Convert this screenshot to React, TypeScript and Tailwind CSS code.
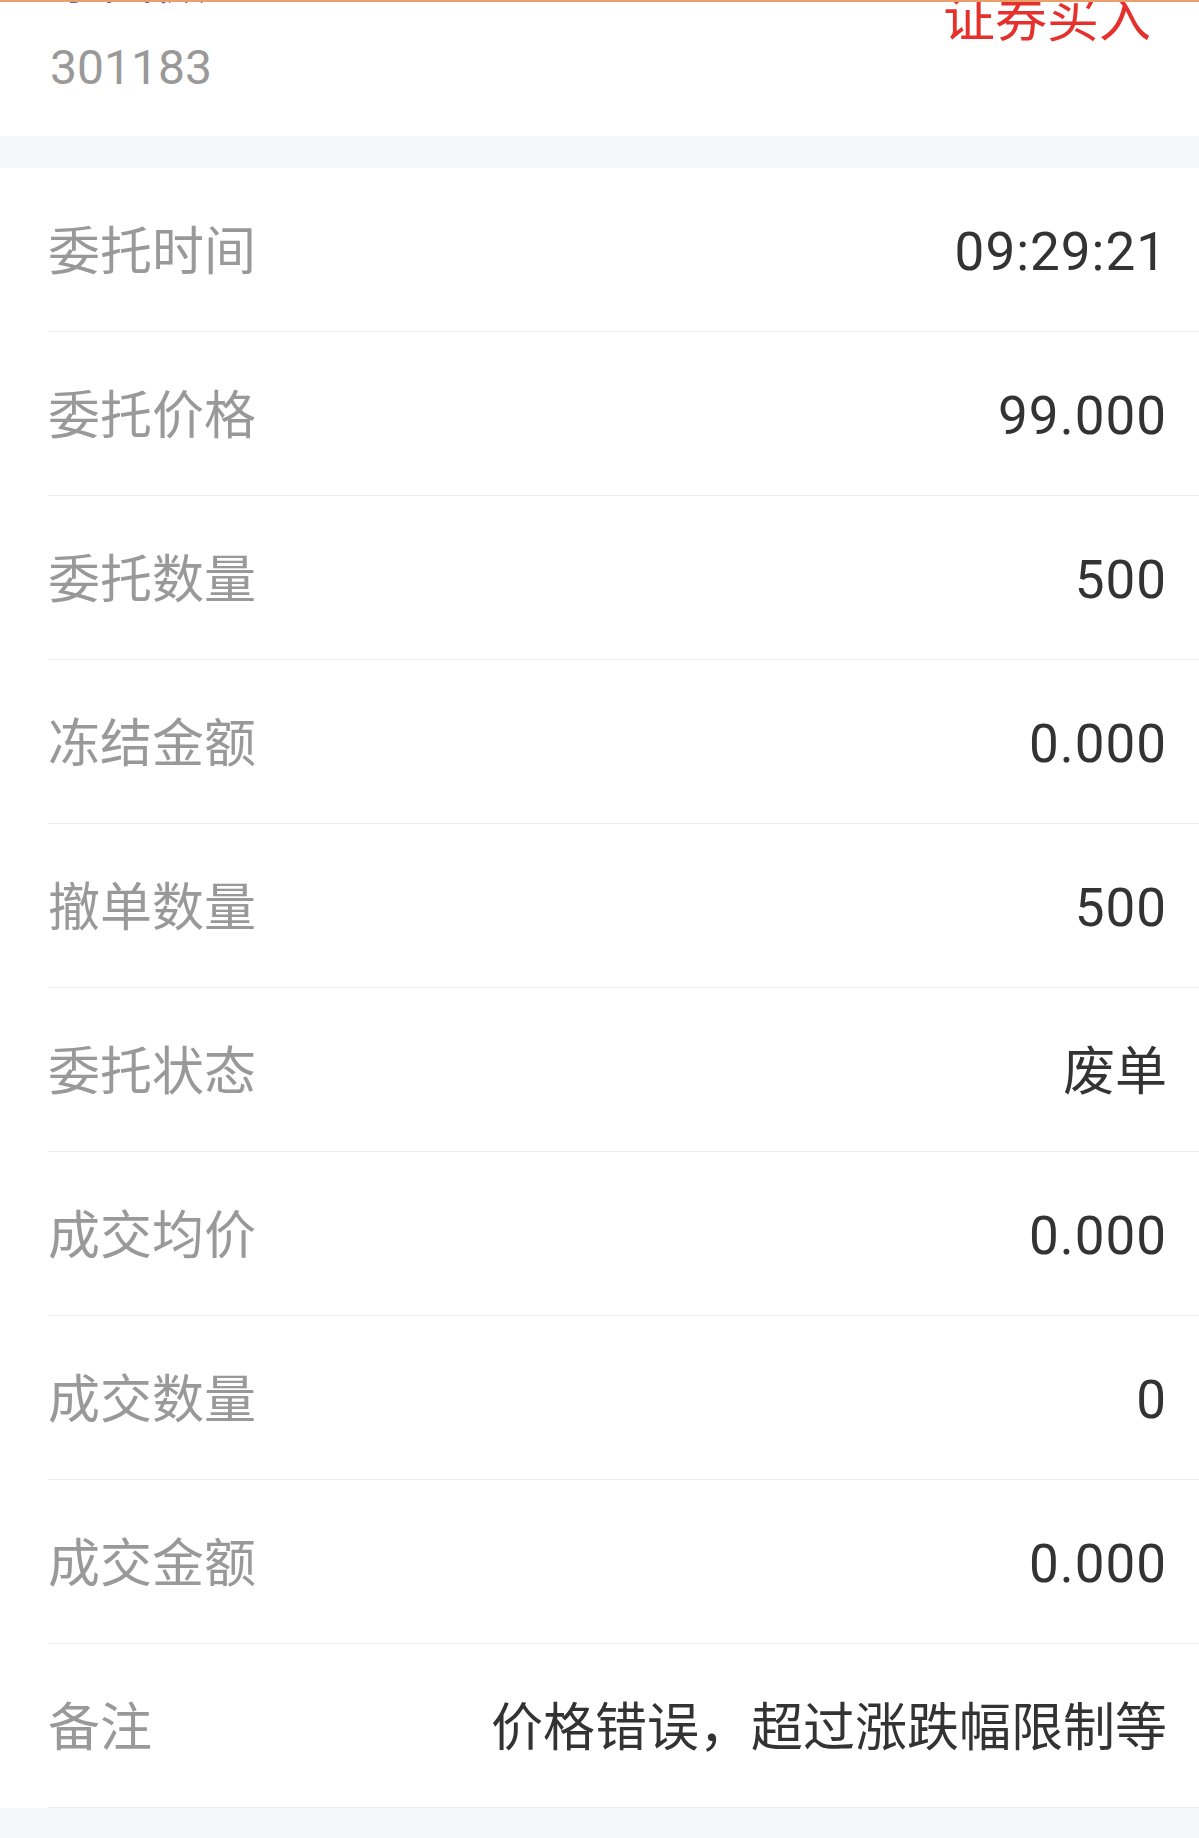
import React from "react";

interface DetailRow {
  label: string;
  value: string;
}

const rows: DetailRow[] = [
  { label: "委托时间", value: "09:29:21" },
  { label: "委托价格", value: "99.000" },
  { label: "委托数量", value: "500" },
  { label: "冻结金额", value: "0.000" },
  { label: "撤单数量", value: "500" },
  { label: "委托状态", value: "废单" },
  { label: "成交均价", value: "0.000" },
  { label: "成交数量", value: "0" },
  { label: "成交金额", value: "0.000" },
  { label: "备注", value: "价格错误，超过涨跌幅限制等" },
];

const isNumeric = (v: string) => /^[0-9.:]+$/.test(v);

export default function App() {
  return (
    <div
      className="w-[1199px] h-[1838px] bg-[#f5f6f8] overflow-hidden antialiased"
      style={{ fontFamily: "Roboto, 'Noto Sans CJK SC', sans-serif" }}
    >
      {/* order header, scrolled so the name is cut off */}
      <div className="relative h-[136px] bg-white overflow-hidden">
        <div className="absolute top-0 left-0 right-0 h-[2px] bg-[#e9a06c]" />
        <div className="flex justify-between pl-[50px] pr-[48px]">
          <div className="-mt-[44px] flex flex-col">
            <div className="text-[52px] leading-[52px] text-[#5b63b5]">东田微</div>
            <div className="mt-[36px] text-[48px] leading-[48px] text-[#999999]">
              301183
            </div>
          </div>
          <div className="-mt-[6px] text-[52px] leading-[52px] text-[#e5302c]">
            证券买入
          </div>
        </div>
      </div>

      <div className="h-[32px]" />

      {/* detail rows */}
      <div className="bg-white">
        {rows.map((row) => (
          <div key={row.label} className="pl-[48px]">
            <div className="h-[164px] flex items-center justify-between pt-[6px] pr-[32px] border-b border-[#ececec]">
              <span className="text-[52px] text-[#999999] leading-none">
                {row.label}
              </span>
              {isNumeric(row.value) ? (
                <span className="text-[53px] tracking-[1px] text-[#333333] leading-none">
                  {row.value}
                </span>
              ) : (
                <span className="text-[52px] text-[#333333] leading-none">
                  {row.value}
                </span>
              )}
            </div>
          </div>
        ))}
      </div>
    </div>
  );
}
